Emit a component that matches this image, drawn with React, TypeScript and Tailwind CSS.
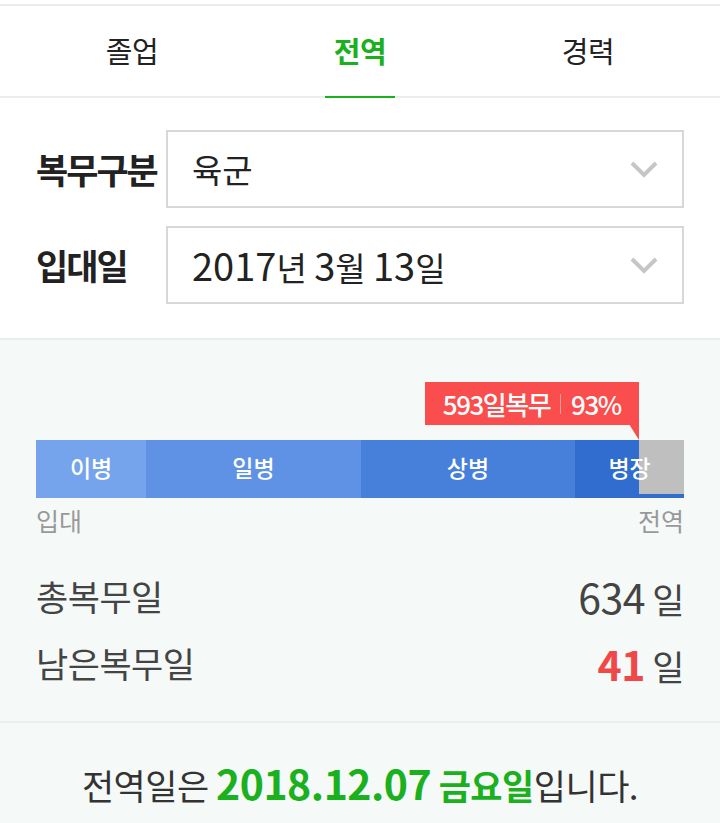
import { useState } from 'react';

const tabs = ['졸업', '전역', '경력'];

const ranks = [
  { name: '이병', width: '17%', color: 'bg-[#76a4ec]' },
  { name: '일병', width: '33.1%', color: 'bg-[#5f92e4]' },
  { name: '상병', width: '33.1%', color: 'bg-[#4680da]' },
  { name: '병장', width: '16.8%', color: 'bg-[#306dcf]' },
];

function Chevron() {
  return (
    <svg width="28" height="17" viewBox="0 0 28 17" fill="none">
      <polyline points="2 2 14 14 26 2" stroke="#c6c6c6" strokeWidth="4" />
    </svg>
  );
}

// digits in the reference font run larger than the hangul around them
function Num({ children, className = '' }: { children: React.ReactNode; className?: string }) {
  return <span className={className}>{children}</span>;
}

function SelectRow({ label, children }: { label: string; children: React.ReactNode }) {
  return (
    <div className="flex items-center">
      <div className="w-[130px] shrink-0 text-[35px] font-bold tracking-[-2px] text-[#222]">{label}</div>
      <div className="flex h-[78px] flex-1 items-center justify-between border-2 border-[#d8d8d8] bg-white pl-[24px] pr-[24px]">
        <span className="text-[33px] leading-none text-[#222]">{children}</span>
        <Chevron />
      </div>
    </div>
  );
}

export default function App() {
  const [active, setActive] = useState(1);
  const percent = 93;

  return (
    <div className="min-h-[823px] bg-[#f5f9f8] font-['Noto_Sans_CJK_KR','Noto_Sans',sans-serif]">
      <div className="bg-white pt-[4px]">
        <div className="border-t-2 border-b-2 border-[#eaeeed]">
          <div className="flex px-[18px]">
            {tabs.map((t, i) => (
              <button
                key={t}
                onClick={() => setActive(i)}
                className={`relative flex h-[90px] flex-1 items-center justify-center text-[29px] tracking-[-0.5px] ${
                  i === active ? 'font-bold text-[#1bb01d]' : 'text-[#222]'
                }`}
              >
                {t}
                {i === active ? (
                  <span className="absolute bottom-[-2px] left-1/2 h-[2px] w-[70px] -translate-x-1/2 bg-[#1bb01d]" />
                ) : null}
              </button>
            ))}
          </div>
        </div>

        <div className="flex flex-col gap-[18px] px-[36px] pt-[32px] pb-[34px]">
          <SelectRow label="복무구분">육군</SelectRow>
          <SelectRow label="입대일">
            <Num className="text-[38px]">2017</Num>년 <Num className="text-[38px]">3</Num>월{' '}
            <Num className="text-[38px]">13</Num>일
          </SelectRow>
        </div>
      </div>

      <div className="border-t-2 border-[#eaeeed] px-[36px] pt-[100px]">
        <div className="relative">
          <div className="absolute bottom-full" style={{ right: `${100 - percent}%` }}>
            <div className="mb-[15px] flex h-[43px] items-center whitespace-nowrap bg-[#fa4d4d] px-[18px] text-[26px] font-medium tracking-[-1.5px] text-white">
              <span>593일복무</span>
              <span className="mx-[10px] h-[20px] w-px bg-[#ff9a9a]" />
              <span>93%</span>
            </div>
            <svg className="absolute right-0 bottom-0" width="10" height="16" viewBox="0 0 10 16">
              <polygon points="0 0 10 0 10 16" fill="#fa4d4d" />
            </svg>
          </div>

          <div className="relative flex h-[58px]">
            <div
              className="absolute top-0 right-0 bottom-[4px] bg-[#bfbfbf]"
              style={{ left: `${percent}%` }}
            />
            {ranks.map((r) => (
              <div
                key={r.name}
                className={`flex items-center justify-center pb-[3px] text-[23px] font-medium text-white ${r.color}`}
                style={{ width: r.width }}
              >
                <span className="relative z-10">{r.name}</span>
              </div>
            ))}
          </div>
        </div>

        <div className="mt-[4px] flex justify-between text-[25px] text-[#999]">
          <span>입대</span>
          <span>전역</span>
        </div>

        <div className="mt-[32px] flex flex-col gap-[17px] pb-[32px] text-[35px] tracking-[-0.5px] text-[#444]">
          <div className="flex h-[50px] items-center justify-between">
            <span>총복무일</span>
            <span>
              <Num className="text-[41px]">634</Num> 일
            </span>
          </div>
          <div className="flex h-[50px] items-center justify-between">
            <span>남은복무일</span>
            <span>
              <Num className="text-[41px] font-bold text-[#f04848]">41</Num> 일
            </span>
          </div>
        </div>
      </div>

      <div className="border-t-2 border-[#eaeeed] pt-[35px] text-center text-[35px] leading-[48px] tracking-[-0.5px] text-[#333]">
        전역일은{' '}
        <span className="font-bold text-[#1bb01d]">
          <Num className="text-[41px]">2018.12.07</Num> 금요일
        </span>
        입니다.
      </div>
    </div>
  );
}
